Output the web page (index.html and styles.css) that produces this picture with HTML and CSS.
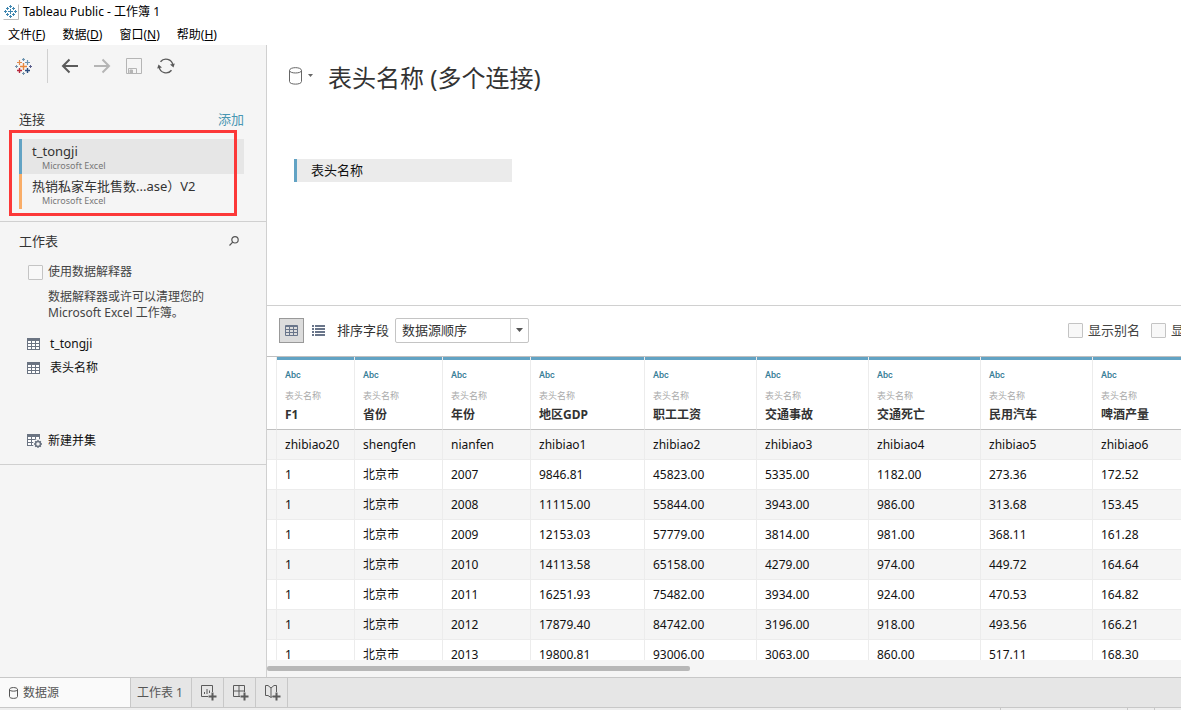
FILE: index.html
```html
<!DOCTYPE html>
<html lang="zh-CN">
<head>
<meta charset="utf-8">
<title>Tableau Public - 工作簿 1</title>
<link rel="stylesheet" href="styles.css">
</head>
<body>
<svg class="defs" aria-hidden="true">
  <symbol id="grid" viewBox="0 0 13 12"><path d="M0 0h13v12H0z" fill="#6b7482"/><path d="M1 3h3v2H1zM5 3h3v2H5zM9 3h3v2H9zM1 6h3v2H1zM5 6h3v2H5zM9 6h3v2H9zM1 9h3v2H1zM5 9h3v2H5zM9 9h3v2H9z" fill="#fff"/></symbol>
</svg>
<header class="titlebar">
  <svg class="app-icon" width="16" height="16" viewBox="0 0 16 16"><path d="M.5 15.500h15V.5" fill="none" stroke="#bbb"/><path d="M7.500 5v5M5 7.500h5M7.500 1v3M6 2.500h3M7.500 11v3M6 12.500h3M2.500 6v3M1 7.500h3M12.500 6v3M11 7.500h3M4.500 3v3M3 4.500h3M10.500 3v3M9 4.500h3M4.500 9v3M3 10.500h3M10.500 9v3M9 10.500h3" fill="none" stroke="#3f86b0"/></svg>
  <span>Tableau Public - 工作簿 1</span>
</header>
<nav class="menubar">
  <button>文件(<u>F</u>)</button>
  <button>数据(<u>D</u>)</button>
  <button>窗口(<u>N</u>)</button>
  <button>帮助(<u>H</u>)</button>
</nav>
<div class="workspace">
  <aside class="sidebar">
    <div class="tools">
      <button class="home" aria-label="开始"><svg width="17" height="17" viewBox="0 0 17 17" fill="none"><path d="M8.500 5v7M5 8.500h7" stroke="#e8863a" stroke-width="1.400"/><path d="M4.500 2v5M2 4.500h5" stroke="#e08a4c" stroke-width="1.200"/><path d="M12.500 2v5M10 4.500h5M8.500 0v3M7 1.500h3" stroke="#6d94b0" stroke-width="1.200"/><path d="M4.500 10v5M2 12.500h5" stroke="#b8293d" stroke-width="1.400"/><path d="M12.500 10v5M10 12.500h5" stroke="#2c4f80" stroke-width="1.400"/><path d="M1.500 7v3M0 8.500h3M8.500 14v3M7 15.500h3" stroke="#7594ab"/><path d="M15.500 7v3M14 8.500h3" stroke="#5a5f8c"/></svg></button>
      <button aria-label="后退"><svg width="18" height="16" viewBox="0 0 18 16" fill="none" stroke="#5b5b5b" stroke-width="2"><path d="M17 8H2M8.500 1.500L2 8l6.500 6.500"/></svg></button>
      <button aria-label="前进"><svg width="18" height="16" viewBox="0 0 18 16" fill="none" stroke="#b5b5b5" stroke-width="2"><path d="M1 8h15M9.500 1.500L16 8l-6.500 6.500"/></svg></button>
      <button aria-label="保存"><svg width="18" height="16" viewBox="0 0 18 16" fill="none" stroke="#b5b5b5"><path d="M1.500.5h15v15h-15zM3.500 15.500v-5h8v5"/><path d="M5 12h2.500v3H5z" fill="#b5b5b5"/></svg></button>
      <button aria-label="刷新"><svg width="18" height="16" viewBox="0 0 18 16" fill="none" stroke="#5b5b5b" stroke-width="1.400"><path d="M3.500 3.800A7 7 0 0 1 15.900 7M14.500 12.200A7 7 0 0 1 2.100 9"/><path d="M13 6.500L17.800 5.500 16.500 9.500zM5 9.500L.2 10.500 1.500 6.500z" fill="#5b5b5b" stroke="none"/></svg></button>
    </div>
    <section class="connections">
      <div class="section-head"><h2>连接</h2><a href="#">添加</a></div>
      <ul class="conn-list">
        <li class="conn selected"><span>t_tongji</span><small>Microsoft Excel</small></li>
        <li class="conn orange"><span>热销私家车批售数...ase）V2</span><small>Microsoft Excel</small></li>
      </ul>
      <div class="highlight"></div>
    </section>
    <section class="sheets">
      <div class="section-head"><h2>工作表</h2><button aria-label="搜索"><svg width="10" height="10" viewBox="0 0 10 10" fill="none" stroke="#555" stroke-width="1.200"><circle cx="6" cy="3.800" r="3.200"/><path d="M3.700 6.200L.5 9.500"/></svg></button></div>
      <label class="check"><input type="checkbox"><span>使用数据解释器</span></label>
      <p class="hint">数据解释器或许可以清理您的<br>Microsoft Excel 工作簿。</p>
      <ul class="sheet-list">
        <li><svg width="13" height="12"><use href="#grid"/></svg><span>t_tongji</span></li>
        <li><svg width="13" height="12"><use href="#grid"/></svg><span>表头名称</span></li>
      </ul>
      <button class="union"><svg width="15" height="14" viewBox="0 0 15 14"><use href="#grid" width="13" height="12"/><circle cx="11" cy="10" r="5" fill="#f5f5f5"/><circle cx="11" cy="10" r="2.500" fill="none" stroke="#6b7482" stroke-width="1.500"/><path d="M11 6v1.500M11 12.500V14M7 10h1.500M13.500 10H15M8.200 7.200l1 1M12.800 11.800l1 1M13.800 7.200l-1 1M9.200 11.800l-1 1" stroke="#6b7482" stroke-width="1.300"/></svg><span>新建并集</span></button>
    </section>
  </aside>
  <main class="main">
    <section class="canvas">
      <div class="source">
        <button class="source-menu" aria-label="数据源菜单"><svg width="24" height="18" viewBox="0 0 24 18"><path d="M.5 3.500v11c0 3.500 12 3.500 12 0v-11C12.500-.3.500-.3.500 3.500c0 3.300 12 3.300 12 0" fill="none" stroke="#666"/><path d="M19 7h5l-2.500 3z" fill="#666"/></svg></button>
        <h1>表头名称 (多个连接)</h1>
      </div>
      <div class="table-pill">表头名称</div>
    </section>
    <div class="gridbar">
      <button class="view active" aria-label="网格"><svg width="13" height="11" viewBox="0 0 13 11" fill="none" stroke="#69758a"><path d="M.5.5h12v10H.5zM.5 1.500h12M.5 4.500h12M.5 7.500h12M4.500 1v9.500M8.500 1v9.500"/></svg></button>
      <button class="view" aria-label="列表"><svg width="13" height="11" viewBox="0 0 13 11" fill="#69758a"><path d="M0 0h2v2H0zM3 0h10v2H3zM0 3h2v2H0zM3 3h10v2H3zM0 6h2v2H0zM3 6h10v2H3zM0 9h2v2H0zM3 9h10v2H3z"/></svg></button>
      <label class="sort-label" for="sort">排序字段</label>
      <div class="select"><select id="sort"><option>数据源顺序</option></select><span class="arrow"><svg width="7" height="4" viewBox="0 0 7 4"><path d="M0 0h7L3.500 4z" fill="#555"/></svg></span></div>
      <div class="options">
        <label class="check"><input type="checkbox"><span>显示别名</span></label>
        <label class="check"><input type="checkbox"><span>显示隐藏字段</span></label>
      </div>
    </div>
    <div class="grid-wrap">
      <table class="data">
        <colgroup><col class="c-gutter"><col class="c-small"><col class="c-mid"><col class="c-mid"><col class="c-large"><col class="c-wide"><col class="c-wide"><col class="c-wide"><col class="c-wide"><col class="c-wide"></colgroup>
        <thead><tr><td></td>
          <th><i>Abc</i><small>表头名称</small>F1</th><th><i>Abc</i><small>表头名称</small>省份</th><th><i>Abc</i><small>表头名称</small>年份</th><th><i>Abc</i><small>表头名称</small>地区GDP</th><th><i>Abc</i><small>表头名称</small>职工工资</th><th><i>Abc</i><small>表头名称</small>交通事故</th><th><i>Abc</i><small>表头名称</small>交通死亡</th><th><i>Abc</i><small>表头名称</small>民用汽车</th><th><i>Abc</i><small>表头名称</small>啤酒产量</th>
        </tr></thead>
        <tbody>
          <tr><td></td><td>zhibiao20</td><td>shengfen</td><td>nianfen</td><td>zhibiao1</td><td>zhibiao2</td><td>zhibiao3</td><td>zhibiao4</td><td>zhibiao5</td><td>zhibiao6</td></tr>
          <tr><td></td><td>1</td><td>北京市</td><td>2007</td><td>9846.81</td><td>45823.00</td><td>5335.00</td><td>1182.00</td><td>273.36</td><td>172.52</td></tr>
          <tr><td></td><td>1</td><td>北京市</td><td>2008</td><td>11115.00</td><td>55844.00</td><td>3943.00</td><td>986.00</td><td>313.68</td><td>153.45</td></tr>
          <tr><td></td><td>1</td><td>北京市</td><td>2009</td><td>12153.03</td><td>57779.00</td><td>3814.00</td><td>981.00</td><td>368.11</td><td>161.28</td></tr>
          <tr><td></td><td>1</td><td>北京市</td><td>2010</td><td>14113.58</td><td>65158.00</td><td>4279.00</td><td>974.00</td><td>449.72</td><td>164.64</td></tr>
          <tr><td></td><td>1</td><td>北京市</td><td>2011</td><td>16251.93</td><td>75482.00</td><td>3934.00</td><td>924.00</td><td>470.53</td><td>164.82</td></tr>
          <tr><td></td><td>1</td><td>北京市</td><td>2012</td><td>17879.40</td><td>84742.00</td><td>3196.00</td><td>918.00</td><td>493.56</td><td>166.21</td></tr>
          <tr><td></td><td>1</td><td>北京市</td><td>2013</td><td>19800.81</td><td>93006.00</td><td>3063.00</td><td>860.00</td><td>517.11</td><td>168.30</td></tr>
        </tbody>
      </table>
    </div>
    <div class="hscroll"><div class="thumb"></div></div>
  </main>
</div>
<footer class="tabs">
  <button class="tab current"><svg width="9" height="12" viewBox="0 0 9 12" fill="none" stroke="#555"><path d="M.5 2.500v7c0 2.500 8 2.500 8 0v-7c0-2.600-8-2.600-8 0 0 2.200 8 2.200 8 0"/></svg><span>数据源</span></button>
  <button class="tab">工作表 1</button>
  <button class="tab add" aria-label="新建工作表"><svg width="16" height="16" viewBox="0 0 16 16" fill="none" stroke="#5b5b5b"><path d="M7 11.500H.5v-11h11V7M3.500 9V7M6 9V4M8.500 8V5.500"/><path d="M11.500 7.500v8M7.500 11.500h8" stroke-width="2"/></svg></button>
  <button class="tab add" aria-label="新建仪表板"><svg width="16" height="16" viewBox="0 0 16 16" fill="none" stroke="#5b5b5b"><path d="M7 11.500H.5v-11h11V7M.5 6h11M6 .5v11"/><path d="M11.500 7.500v8M7.500 11.500h8" stroke-width="2"/></svg></button>
  <button class="tab add" aria-label="新建故事"><svg width="16" height="16" viewBox="0 0 16 16" fill="none" stroke="#5b5b5b"><path d="M11.500 7V.5H9L6 3 3 .5H.5v10H3l3 2 1.500-1M6 3v9"/><path d="M11.500 7.500v8M7.500 11.500h8" stroke-width="2"/></svg></button>
</footer>
<div class="status"><span class="s-wide"></span><span class="s-small"></span><span class="s-small"></span></div>
</body>
</html>
```
FILE: styles.css
```css
* { box-sizing: border-box; }
body {
  margin: 0;
  height: 100vh;
  display: flex;
  flex-direction: column;
  overflow: hidden;
  font: 12px/16px "Noto Sans", "Noto Sans CJK SC", sans-serif;
  color: #111;
  background: #fff;
}
button { font: inherit; color: inherit; background: none; border: 0; padding: 0; }
svg { display: block; flex: none; }
.defs { position: absolute; width: 0; height: 0; }
ul { list-style: none; margin: 0; padding: 0; }
h1, h2, p { margin: 0; font-weight: 400; }

.titlebar { display: flex; align-items: center; gap: 4px; height: 24px; padding: 0 3px; flex: none; color: #000; }
.menubar { display: flex; gap: 17px; height: 21px; padding-left: 8px; flex: none; align-items: center; color: #000; }
.menubar u { text-underline-offset: 1px; }

.workspace { flex: 1; min-height: 0; display: flex; }
.sidebar { width: 267px; flex: none; background: #f5f5f5; border-right: 1px solid #d0d0d0; }
.tools { display: flex; align-items: center; gap: 14px; height: 42px; }
.tools .home { display: flex; align-items: center; width: 48px; height: 34px; padding-left: 15px; border-right: 1px solid #d0d0d0; margin: 0 -1px 0 0; }

.section-head { display: flex; justify-content: space-between; align-items: center; height: 20px; font-size: 13px; color: #333; }
.section-head h2 { font-size: 13px; }
.section-head a { color: #4996b2; text-decoration: none; }
.connections { position: relative; padding: 22px 22px 12px 19px; border-bottom: 1px solid #d0d0d0; }
.conn-list { margin-top: 10px; }
.conn { display: flex; flex-direction: column; height: 35px; padding: 4px 0 0 10px; border-left: 3px solid #62a3c4; font-size: 13px; color: #333; white-space: nowrap; }
.conn.selected { background: #e6e6e6; }
.conn.orange { border-color: #f9ad68; }
.conn span { line-height: 17px; }
.conn small { padding-left: 10px; font-size: 9px; line-height: 12px; color: #777; }
.highlight { position: absolute; top: 43px; left: 9px; right: 29px; bottom: 5px; border: 3px solid #fc3838; }

.sheets { padding: 9px 27px 14px 19px; border-bottom: 1px solid #d0d0d0; }
.check { display: flex; align-items: center; gap: 5px; color: #444; white-space: nowrap; }
.check input { appearance: none; width: 15px; height: 15px; margin: 0; background: #f8f8f8; border: 1px solid #c4c4c4; border-radius: 1px; }
.sheets .check { margin: 13px 0 0 9px; }
.hint { margin: 9px 0 0 29px; color: #444; white-space: nowrap; }
.sheet-list { margin: 11px 0 0 8px; color: #111; }
.sheet-list li { display: flex; align-items: center; gap: 10px; height: 24px; }
.union { display: flex; align-items: center; gap: 6px; margin: 52px 0 0 8px; height: 18px; }

.main { flex: 1; min-width: 0; display: flex; flex-direction: column; background: #fff; }
.canvas { height: 261px; flex: none; padding: 16px 22px; border-bottom: 1px solid #d0d0d0; }
.source { display: flex; align-items: center; gap: 15px; height: 34px; }
.source-menu { margin-bottom: 4px; }
.source h1 { font-size: 24px; line-height: 34px; color: #333; }
.table-pill { width: 218px; margin: 64px 0 0 5px; padding-left: 14px; border-left: 3px solid #62a3c4; background: #ebebeb; font-size: 13px; line-height: 23px; }

.gridbar { display: flex; align-items: center; flex: none; height: 50px; padding: 0 0 2px 12px; font-size: 13px; color: #333; overflow: hidden; }
.view { display: grid; place-items: center; width: 25px; height: 25px; }
.view.active { background: #dcdcdc; border: 1px solid #999; }
.view + .view { margin-left: 2px; }
.sort-label { margin: 0 6px 0 6px; }
.select { display: flex; position: relative; }
.select select { appearance: none; width: 134px; height: 25px; padding: 0 26px 0 6px; font: inherit; color: #333; background: #fff; border: 1px solid #c4c4c4; border-radius: 2px; }
.arrow { position: absolute; top: 1px; right: 1px; bottom: 1px; width: 18px; display: grid; place-items: center; border-left: 1px solid #d8d8d8; pointer-events: none; }
.options { display: flex; gap: 11px; width: 113px; flex: none; margin-left: auto; }

.grid-wrap { flex: 1; min-height: 0; overflow: hidden; border-top: 1px solid #c0c0c0; }
.data { table-layout: fixed; width: 938px; border-collapse: separate; border-spacing: 0; }
.c-gutter { width: 10px; }
.c-small { width: 78px; }
.c-mid { width: 88px; }
.c-large { width: 114px; }
.c-wide { width: 112px; }
.data th, .data td { padding: 0 0 0 8px; border-right: 1px solid #ececec; border-bottom: 1px solid #ececec; text-align: left; white-space: nowrap; }
.data td { height: 30px; }
.data tbody tr:nth-child(odd) { background: #f5f5f5; }
.data thead td, .data thead th { height: 73px; border-bottom-color: #c0c0c0; }
.data th { padding-top: 10px; vertical-align: top; line-height: 22px; color: #333; background: linear-gradient(#62a3c4, #62a3c4) top / 100% 3px no-repeat padding-box; }
.data i { display: block; font: 500 9px/16px Roboto, sans-serif; color: #367d96; }
.data small { display: block; margin-top: 5px; font-size: 9px; font-weight: 400; line-height: 16px; color: #aaa; }

.hscroll { flex: none; height: 17px; padding-top: 6px; background: #f5f5f5; }
.thumb { width: 47%; max-width: 423px; height: 5px; border-radius: 2px; background: #b8b8b8; }

.tabs { display: flex; flex: none; height: 31px; background: #e6e6e6; border-top: 1px solid #c8c8c8; border-bottom: 1px solid #c8c8c8; color: #555; }
.tab { display: flex; align-items: center; padding: 0 8px 0 6px; border-right: 1px solid #c8c8c8; }
.tab.current { width: 131px; gap: 5px; padding-left: 9px; background: #fafafa; }
.tab.add { width: 32px; padding: 0 0 0 9px; }
.status { display: flex; flex: none; justify-content: flex-end; height: 2px; background: #eee; }
.status span { border-left: 1px solid #c8c8c8; }
.s-wide { width: 127px; }
.s-small { width: 27px; }
```
